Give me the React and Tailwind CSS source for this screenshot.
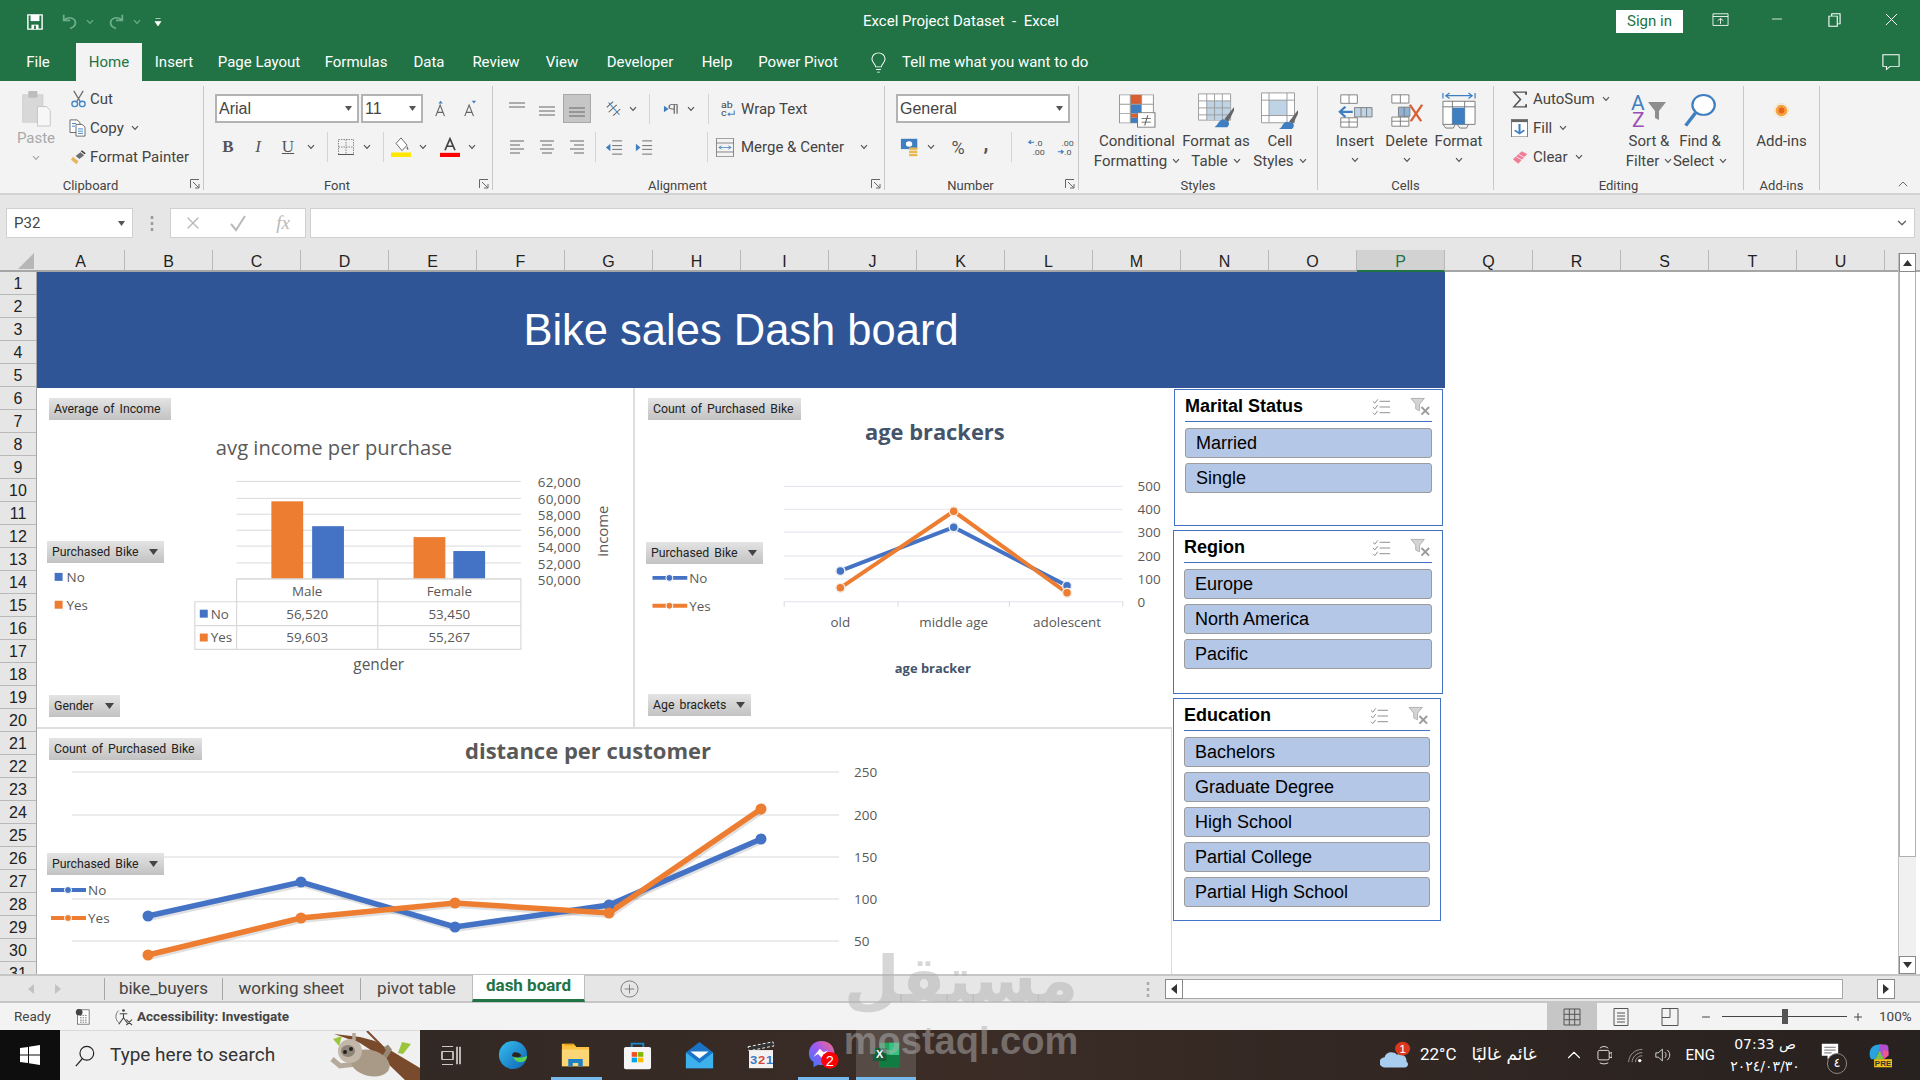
import React from "react";
import { ChevronDown, ChevronUp, Minus, Plus, X } from "lucide-react";

const Chev = ({ className = "text-[#555]" }) => (
  <svg width="8" height="6" viewBox="0 0 8 6" className={className}>
    <path d="M1 1.200 4 4.400 7 1.200" fill="none" stroke="currentColor" strokeWidth="1.200" />
  </svg>
);

const Caret = () => (
  <svg width="7" height="5" viewBox="0 0 7 5">
    <path d="M0 0h7L3.500 5z" fill="#555" />
  </svg>
);

const Sep = ({ className = "h-[30px]" }) => <div className={`w-px bg-[#d4d4d4] ${className}`} />;

const Slot = ({ className, children }) => (
  <div className={`flex items-center justify-center shrink-0 ${className}`}>{children}</div>
);

// ---- ribbon icons

const PasteIcon = () => (
  <svg width="33" height="37" viewBox="0 0 36 38" preserveAspectRatio="none">
    <rect x="3" y="5" width="22" height="28" fill="#d8d8d8" stroke="#cfcfcf" />
    <rect x="9" y="1" width="10" height="7" rx="1" fill="#bdbdbd" />
    <path d="M19 17h10l4 4v16H19z" fill="#f7f7f7" stroke="#c4c4c4" />
  </svg>
);

const CutIcon = () => (
  <svg width="17" height="18" viewBox="0 0 18 20" preserveAspectRatio="none">
    <path d="M4 1 11 13M14 1 7 13" stroke="#6f6f6f" strokeWidth="1.400" fill="none" />
    <circle cx="5" cy="15.500" r="3" fill="none" stroke="#3f87c9" strokeWidth="1.400" />
    <circle cx="13" cy="15.500" r="3" fill="none" stroke="#3f87c9" strokeWidth="1.400" />
  </svg>
);

const CopyIcon = () => (
  <svg width="18" height="18" viewBox="0 0 18 20" preserveAspectRatio="none">
    <path d="M1 1h7l3 3v11H1z" fill="#fff" stroke="#666" />
    <path d="M7 6h6l3 3v10H7z" fill="#fff" stroke="#666" />
    <path d="M3 5h4M3 8h3M9 11h5M9 13.500h5M9 16h5" stroke="#3f87c9" />
  </svg>
);

const PainterIcon = () => (
  <svg width="17" height="15" viewBox="0 0 18 20" preserveAspectRatio="none">
    <path d="M3 9 9 15 7 19 1 13z" fill="#e5b65c" />
    <path d="M6 8 11 3l4 4-5 5z" fill="#6e6e6e" />
    <path d="M12 1l4 4" stroke="#444" strokeWidth="2" />
  </svg>
);

const Launcher = () => (
  <svg width="10" height="10" viewBox="0 0 10 10" className="absolute right-[3px] bottom-[1px]">
    <path d="M.5 9V.5H9M3 3l5.500 5.500M9 5v4H5" fill="none" stroke="#666" />
  </svg>
);

const Lines = ({ ys, align = "left" }) => {
  const widths = [14, 10, 14, 10];
  return (
    <svg width="18" height="16" viewBox="0 0 18 16">
      {ys.map((y, i) => {
        const w = widths[i % 4];
        const x = align === "left" ? 2 : align === "center" ? 9 - w / 2 : 16 - w;
        return <path key={y} d={`M${x} ${y}h${w}`} stroke="#666" />;
      })}
    </svg>
  );
};

const FullLines = ({ ys }) => (
  <svg width="18" height="18" viewBox="0 0 18 18">
    {ys.map((y) => (
      <path key={y} d={`M1 ${y}h16`} stroke="#666" />
    ))}
  </svg>
);

const BorderIcon = () => (
  <svg width="18" height="18" viewBox="0 0 18 18">
    <path d="M1.500 1.500h15v15h-15zM9 1.500v15M1.500 9h15" fill="none" stroke="#8a8a8a" strokeDasharray="1.500 1" />
    <path d="M1 16.500h16" stroke="#555" />
  </svg>
);

const FillIcon = () => (
  <svg width="20" height="20" viewBox="0 0 20 22" preserveAspectRatio="none">
    <path d="M5 7 10 1l6 8-5 6z" fill="#fff" stroke="#666" />
    <path d="M16 10c1 2 2 3 1 4-1 0-2-1-1-4z" fill="#666" />
    <rect x="0" y="17" width="20" height="5" fill="#ffe600" />
  </svg>
);

const FontColorIcon = () => (
  <svg width="20" height="20" viewBox="0 0 20 24" preserveAspectRatio="none">
    <path d="M5 16 10 2l5 14M7 11h6" fill="none" stroke="#444" strokeWidth="1.700" />
    <rect x="0" y="19" width="20" height="5" fill="#ff0000" />
  </svg>
);

const GrowFont = ({ up }) => (
  <svg width="14" height="17" viewBox="0 0 16 20" preserveAspectRatio="none">
    <path d="M2 19 7 6l5 13M4 14.500h6" fill="none" stroke="#666" strokeWidth="1.300" />
    <path d={up ? "M5 4l2.500-3L10 4z" : "M10 1h5l-2.500 3z"} fill="#3f7fc1" />
  </svg>
);

const OrientIcon = () => (
  <svg width="18" height="18" viewBox="0 0 20 22" preserveAspectRatio="none">
    <path d="M2 9 9 2M4 15l9-9M9 19l8-8" stroke="#666" strokeWidth="1.200" />
    <path d="M4 3l12 15" stroke="#3f7fc1" strokeWidth="1.200" />
  </svg>
);

const RtlIcon = () => (
  <svg width="15" height="12" viewBox="0 0 16 18" preserveAspectRatio="none">
    <path d="M1 4l5 5-5 5z" fill="#3f7fc1" />
    <path d="M12 2v14M15 2v14M15 2h-5a3 3 0 0 0 0 7h2" fill="none" stroke="#666" strokeWidth="1.300" />
  </svg>
);

const WrapIcon = () => (
  <svg width="16" height="18" viewBox="0 0 18 24" preserveAspectRatio="none">
    <text x="1" y="10" fontSize="12" fill="#444">ab</text>
    <text x="1" y="22" fontSize="12" fill="#444">c</text>
    <path d="M16 14v5H9m2-2-2 2 2 2" fill="none" stroke="#3f7fc1" strokeWidth="1.200" />
  </svg>
);

const IndentIcon = ({ out }) => (
  <svg width="18" height="17" viewBox="0 0 20 18" preserveAspectRatio="none">
    <path d="M8 2h11M8 7h11M8 11h11M8 16h11" stroke="#666" />
    <path d={out ? "M6 5 1 9l5 4z" : "M1 5l5 4-5 4z"} fill="#3f7fc1" />
  </svg>
);

const MergeIcon = () => (
  <svg width="18" height="19" viewBox="0 0 19 34" preserveAspectRatio="none">
    <path d="M.5.500h18v33H.5zM.5 9h18M.5 25h18" fill="none" stroke="#666" />
    <path d="M3 17h13M6 14l-3 3 3 3M13 14l3 3-3 3" fill="none" stroke="#3f7fc1" />
  </svg>
);

const CurrencyIcon = () => (
  <svg width="20" height="19" viewBox="0 0 22 24" preserveAspectRatio="none">
    <rect x="1" y="1" width="18" height="13" fill="#3f7fc1" />
    <circle cx="10" cy="7.500" r="3.500" fill="#fff" />
    <rect x="10" y="12" width="9" height="3" fill="#e7b94e" />
    <rect x="10" y="16" width="9" height="3" fill="#e7b94e" />
    <rect x="10" y="20" width="9" height="3" fill="#e7b94e" />
  </svg>
);

const DecimalIcon = ({ more }) => (
  <svg width="18" height="18" viewBox="0 0 20 26" preserveAspectRatio="none">
    <text x={more ? 9 : 6} y="11" fontSize="10" fill="#555">{more ? ".0" : ".00"}</text>
    <text x={more ? 6 : 9} y="24" fontSize="10" fill="#555">{more ? ".00" : ".0"}</text>
    <path d={more ? "M8 6H2m2.500-2.500L2 6l2.500 2.500" : "M8 20H2m3.500-2.500L8 20l-2.500 2.500"} fill="none" stroke="#3f7fc1" strokeWidth="1.500" />
  </svg>
);

const CondIcon = () => (
  <svg width="37" height="34" viewBox="0 0 36 40" preserveAspectRatio="none">
    <path d="M.5 1h33v33H.5z" fill="#fff" stroke="#999" />
    <rect x="11" y="1" width="11" height="11" fill="#d95f33" />
    <rect x="11" y="12" width="11" height="11" fill="#3f7fc1" />
    <rect x="11" y="23" width="11" height="5" fill="#d95f33" />
    <rect x="11" y="28" width="11" height="6" fill="#3f7fc1" />
    <path d="M.5 12h33M.5 23h33M11 1v33M22 1v11" stroke="#999" />
    <rect x="18" y="22" width="17" height="17" fill="#fff" stroke="#777" />
    <path d="M22 29h9M22 33h9M28 25l-3 12" stroke="#555" />
  </svg>
);

const TableIcon = () => (
  <svg width="37" height="35" viewBox="0 0 38 40" preserveAspectRatio="none">
    <path d="M.5 1h33v30H.5z" fill="#fff" stroke="#999" />
    <rect x="9" y="9" width="24" height="22" fill="#bfd3e6" />
    <path d="M.5 9h33M.5 17h33M.5 25h33M9 1v30M17 1v30M25 1v30" stroke="#999" />
    <path d="M37 16 27 30l4 3 6-13z" fill="#666" />
    <path d="M26 30c-5 1-5 6-9 9h13c3-3 2-6 0-7z" fill="#3f7fc1" />
  </svg>
);

const CellStyleIcon = () => (
  <svg width="38" height="38" viewBox="0 0 38 42" preserveAspectRatio="none">
    <path d="M.5 1h33v33H.5z" fill="#fff" stroke="#999" />
    <rect x="8" y="9" width="18" height="17" fill="#bfd3e6" />
    <path d="M8 1v33M26 1v33M.5 9h33M.5 26h33" stroke="#999" />
    <path d="M37 20 28 33l4 2 5-11z" fill="#666" />
    <path d="M26 33c-5 1-4 6-8 8h13c3-3 2-6 0-7z" fill="#3f7fc1" />
  </svg>
);

const InsertIcon = () => (
  <svg width="35" height="34" viewBox="0 0 38 40" preserveAspectRatio="none">
    <path d="M3 1h18v10H3zM12 1v10M3 28h18v11H3zM3 33h18M12 28v11" fill="#fff" stroke="#777" />
    <path d="M18 16h19v11H18zM25 16v11M31 16v11" fill="#bfd3e6" stroke="#777" />
    <path d="M16 21H2m6-6-6 6 6 6" fill="none" stroke="#3f7fc1" strokeWidth="2.500" />
  </svg>
);

const DeleteIcon = () => (
  <svg width="36" height="33" viewBox="0 0 38 40" preserveAspectRatio="none">
    <path d="M3 1h18v10H3zM12 1v10M3 28h18v11H3zM3 33h18M12 28v11" fill="#fff" stroke="#777" />
    <path d="M10 16h12v11H10zM16 16v11" fill="#8fb3d6" stroke="#777" />
    <path d="M22 13 34 33M35 13 23 33" stroke="#d95f33" strokeWidth="2.500" />
  </svg>
);

const FormatIcon = () => (
  <svg width="34" height="37" viewBox="0 0 36 40" preserveAspectRatio="none">
    <path d="M1 1v6M35 1v6M4 4h28M8 1 4 4l4 3M28 1l4 3-4 3" fill="none" stroke="#3f7fc1" strokeWidth="1.300" />
    <path d="M1 10h34v25H1zM11 10v25M24 10v25M1 16h34" fill="#fff" stroke="#777" />
    <rect x="11" y="17" width="13" height="18" fill="#3f7fc1" />
    <path d="M1 35l3 4h8l2-4M16 35l3 4h7l2-4" fill="none" stroke="#777" />
  </svg>
);

const SumIcon = () => (
  <svg width="15" height="17" viewBox="0 0 16 28" preserveAspectRatio="none">
    <path d="M15 6V2H2l7 12-7 12h13v-4" fill="none" stroke="#555" strokeWidth="2" />
  </svg>
);

const FillDown = () => (
  <svg width="17" height="18" viewBox="0 0 18 32" preserveAspectRatio="none">
    <rect x=".5" y=".5" width="17" height="31" fill="#fff" stroke="#777" />
    <rect x=".5" y=".5" width="17" height="5" fill="#666" />
    <path d="M9 9v16M4 20l5 6 5-6" fill="none" stroke="#3f7fc1" strokeWidth="2.200" />
  </svg>
);

const ClearIcon = () => (
  <svg width="16" height="15" viewBox="0 0 18 26" preserveAspectRatio="none">
    <path d="M1 16 11 2l6 5L7 24z" fill="#ee7f97" />
    <path d="M5 12l7 6M8 8l6 5" stroke="#fff" />
  </svg>
);

const SortIcon = () => (
  <svg width="36" height="34" viewBox="0 0 36 34" className="font-['Roboto',sans-serif]">
    <text x="0" y="16" fontSize="21" fill="#3f7fc1">A</text>
    <text x="1" y="33" fontSize="21" fill="#9b4fb5">Z</text>
    <path d="M17 8h18l-7 9v9l-4-2v-7z" fill="#8e8e8e" />
  </svg>
);

const FindIcon = () => (
  <svg width="34" height="35" viewBox="0 0 38 44" preserveAspectRatio="none">
    <circle cx="23" cy="15" r="12.500" fill="#fff" stroke="#3f7fc1" strokeWidth="2.500" />
    <path d="M14 25 3 41" stroke="#3f7fc1" strokeWidth="4" />
  </svg>
);

const AddinsIcon = () => (
  <svg width="15" height="15" viewBox="0 0 18 18">
    <circle cx="9" cy="9" r="7" fill="#f5a142" />
    <circle cx="9" cy="9" r="3.500" fill="#e8641b" />
    <circle cx="9" cy="9" r="8.500" fill="none" stroke="#f7d07a" strokeDasharray="1.500 1.500" />
  </svg>
);

// ---- ribbon parts

const RibbonGroup = ({ className, label, launcher, children }) => (
  <div className={`relative flex h-[104px] flex-col shrink-0 border-r border-[#c8c8c8] ${className}`}>
    <div className="h-[91px]">{children}</div>
    <div className={`h-[13px] text-center text-[13px] leading-[18px] text-[#444] ${launcher ? "pr-[22px]" : ""}`}>{label}</div>
    {launcher && <Launcher />}
  </div>
);

const SmallBtn = ({ icon, label, chev, iconClass = "w-[24px]" }) => (
  <div className="flex h-[24px] items-center whitespace-nowrap text-[#444]">
    <Slot className={iconClass}>{icon}</Slot>
    <span className="flex items-center">{label}</span>
    {chev && <span className="flex pl-[7px]"><Chev /></span>}
  </div>
);

const LargeBtn = ({ icon, lines, chev, className }) => (
  <div className={`flex flex-col items-center shrink-0 pt-[4px] leading-[20px] text-[#444] ${className}`}>
    <div className="flex h-[41px] items-center">{icon}</div>
    {lines.map((line, i) => (
      <div key={line} className="flex items-center gap-[5px] whitespace-nowrap">
        {line}
        {chev && i === 1 && <Chev />}
      </div>
    ))}
    {chev && lines.length === 1 && <div className="flex h-[16px] items-center pt-[2px]"><Chev /></div>}
  </div>
);

const SelectBox = ({ className, children }) => (
  <div className={`flex h-[29px] items-center justify-between border-2 border-[#b3b3b3] bg-white pl-[2px] pr-[5px] text-[#444] ${className}`}>
    {children}
    <Caret />
  </div>
);

const Ribbon = () => (
  <div className="flex h-[114px] shrink-0 border-b-2 border-[#d2d2d2] bg-[#f3f3f3] pt-[5px] text-[15px] font-['Roboto',sans-serif]">
    <RibbonGroup className="w-[204px]" label="Clipboard" launcher>
      <div className="flex">
        <div className="ml-[8px] flex w-[56px] flex-col items-center pt-[4px] text-[#a9a9a9]">
          <PasteIcon />
          <div className="leading-[20px] pt-[1px]">Paste</div>
          <div className="pt-[7px]"><Chev className="text-[#a9a9a9]" /></div>
        </div>
        <div className="ml-[2px] flex flex-col gap-[5px] pt-[1px]">
          <SmallBtn icon={<CutIcon />} label="Cut" />
          <SmallBtn icon={<CopyIcon />} label="Copy" chev />
          <SmallBtn icon={<PainterIcon />} label="Format Painter" />
        </div>
      </div>
    </RibbonGroup>

    <RibbonGroup className="w-[289px]" label="Font" launcher>
      <div className="flex flex-col pt-[8px]">
        <div className="ml-[11px] flex items-center">
          <SelectBox className="w-[144px] font-['Liberation_Sans',sans-serif] text-[16px]">Arial</SelectBox>
          <SelectBox className="ml-[2px] w-[62px] font-['Liberation_Sans',sans-serif] text-[16px]">11</SelectBox>
          <Slot className="ml-[3px] w-[30px]"><GrowFont up /></Slot>
          <Slot className="w-[28px]"><GrowFont /></Slot>
        </div>
        <div className="ml-[9px] mt-[9px] flex h-[30px] items-center text-[#555]">
          <Slot className="w-[30px] font-['Liberation_Serif',serif] text-[17px] font-bold">B</Slot>
          <Slot className="w-[30px] font-['Liberation_Serif',serif] text-[17px] italic">I</Slot>
          <Slot className="w-[30px] font-['Liberation_Serif',serif] text-[17px] underline">U</Slot>
          <Slot className="w-[16px]"><Chev /></Slot>
          <Slot className="w-[16px]"><Sep /></Slot>
          <Slot className="w-[22px]"><BorderIcon /></Slot>
          <Slot className="w-[20px]"><Chev /></Slot>
          <Slot className="w-[12px]"><Sep /></Slot>
          <Slot className="w-[24px]"><FillIcon /></Slot>
          <Slot className="w-[20px]"><Chev /></Slot>
          <Slot className="w-[34px]"><FontColorIcon /></Slot>
          <Slot className="w-[10px]"><Chev /></Slot>
        </div>
      </div>
    </RibbonGroup>

    <RibbonGroup className="w-[392px]" label="Alignment" launcher>
      <div className="flex flex-col pt-[8px] pl-[9px]">
        <div className="flex h-[29px] items-center">
          <Slot className="w-[30px]"><FullLines ys={[3, 7]} /></Slot>
          <Slot className="w-[30px]"><FullLines ys={[7, 11, 15]} /></Slot>
          <Slot className="ml-[1px] h-[29px] w-[28px] border border-[#a8a8a8] bg-[#c6c6c6]"><FullLines ys={[8, 12, 16]} /></Slot>
          <Slot className="ml-[9px] w-[28px]"><OrientIcon /></Slot>
          <Slot className="w-[10px]"><Chev /></Slot>
          <Slot className="w-[22px]"><Sep /></Slot>
          <Slot className="w-[20px]"><RtlIcon /></Slot>
          <Slot className="w-[22px]"><Chev /></Slot>
          <Slot className="w-[12px]"><Sep /></Slot>
          <Slot className="w-[27px]"><WrapIcon /></Slot>
          <span className="whitespace-nowrap pt-[1px] text-[#444]">Wrap Text</span>
        </div>
        <div className="mt-[9px] flex h-[30px] items-center">
          <Slot className="w-[30px]"><Lines ys={[2, 6, 10, 14]} /></Slot>
          <Slot className="w-[30px]"><Lines ys={[2, 6, 10, 14]} align="center" /></Slot>
          <Slot className="w-[30px]"><Lines ys={[2, 6, 10, 14]} align="right" /></Slot>
          <Slot className="w-[6px]"><Sep /></Slot>
          <Slot className="w-[31px]"><IndentIcon out /></Slot>
          <Slot className="w-[29px]"><IndentIcon /></Slot>
          <Slot className="ml-[49px] w-[1px]"><Sep /></Slot>
          <Slot className="w-[33px]"><MergeIcon /></Slot>
          <span className="whitespace-nowrap pt-[1px] text-[#444]">Merge &amp; Center</span>
          <Slot className="ml-[15px] w-[10px]"><Chev /></Slot>
        </div>
      </div>
    </RibbonGroup>

    <RibbonGroup className="w-[194px]" label="Number" launcher>
      <div className="flex flex-col pt-[8px] pl-[11px]">
        <SelectBox className="w-[174px] font-['Liberation_Sans',sans-serif] text-[16px]">General</SelectBox>
        <div className="mt-[9px] flex h-[30px] items-center text-[#555]">
          <Slot className="w-[28px]"><CurrencyIcon /></Slot>
          <Slot className="w-[14px]"><Chev /></Slot>
          <Slot className="ml-[6px] w-[28px] text-[18px]">%</Slot>
          <Slot className="w-[28px] pb-[8px] text-[20px] font-bold">,</Slot>
          <Slot className="w-[22px]"><Sep /></Slot>
          <Slot className="w-[28px]"><DecimalIcon more /></Slot>
          <Slot className="w-[30px]"><DecimalIcon /></Slot>
        </div>
      </div>
    </RibbonGroup>

    <RibbonGroup className="w-[239px]" label="Styles">
      <div className="flex pl-[10px]">
        <LargeBtn className="w-[96px]" icon={<CondIcon />} lines={["Conditional", "Formatting"]} chev />
        <LargeBtn className="w-[62px]" icon={<TableIcon />} lines={["Format as", "Table"]} chev />
        <LargeBtn className="w-[66px]" icon={<CellStyleIcon />} lines={["Cell", "Styles"]} chev />
      </div>
    </RibbonGroup>

    <RibbonGroup className="w-[176px]" label="Cells">
      <div className="flex pl-[11px]">
        <LargeBtn className="w-[52px]" icon={<InsertIcon />} lines={["Insert"]} chev />
        <LargeBtn className="w-[51px]" icon={<DeleteIcon />} lines={["Delete"]} chev />
        <LargeBtn className="w-[53px]" icon={<FormatIcon />} lines={["Format"]} chev />
      </div>
    </RibbonGroup>

    <RibbonGroup className="w-[250px]" label="Editing">
      <div className="flex">
        <div className="ml-[12px] flex w-[116px] flex-col gap-[5px] pt-[1px]">
          <SmallBtn icon={<SumIcon />} label="AutoSum" chev iconClass="w-[27px]" />
          <SmallBtn icon={<FillDown />} label="Fill" chev iconClass="w-[27px]" />
          <SmallBtn icon={<ClearIcon />} label="Clear" chev iconClass="w-[27px]" />
        </div>
        <LargeBtn className="w-[54px]" icon={<SortIcon />} lines={["Sort &", "Filter"]} chev />
        <LargeBtn className="w-[48px]" icon={<FindIcon />} lines={["Find &", "Select"]} chev />
      </div>
    </RibbonGroup>

    <RibbonGroup className="w-[76px]" label="Add-ins">
      <LargeBtn icon={<AddinsIcon />} lines={["Add-ins"]} />
    </RibbonGroup>

    <div className="flex flex-1 items-end justify-end pr-[9px] pb-[1px] text-[#555]">
      <ChevronUp size={16} strokeWidth={1.300} />
    </div>
  </div>
);

// ---- title and tabs

const TABS = [
  ["File", "w-[76px]"],
  ["Home", "w-[66px] bg-[#f3f3f3] text-[#217346]"],
  ["Insert", "w-[64px]"],
  ["Page Layout", "w-[106px]"],
  ["Formulas", "w-[88px]"],
  ["Data", "w-[58px]"],
  ["Review", "w-[76px]"],
  ["View", "w-[56px]"],
  ["Developer", "w-[100px]"],
  ["Help", "w-[54px]"],
  ["Power Pivot", "w-[108px]"],
];

const TitleBar = () => (
  <div className="shrink-0 bg-[#217346] text-[15px] text-white font-['Roboto',sans-serif]">
    <div className="flex h-[43px] items-center">
      <div className="flex w-[863px] shrink-0 items-center">
        <Slot className="ml-[24px] w-[22px]">
          <svg width="16" height="16" viewBox="0 0 18 18">
            <path d="M1 1h16v16H1z" fill="none" stroke="#fff" strokeWidth="1.600" />
            <rect x="4" y="1" width="10" height="7" fill="#fff" />
            <rect x="5" y="12" width="8" height="5" fill="#fff" />
            <rect x="8" y="13" width="2" height="4" fill="#217346" />
          </svg>
        </Slot>
        <Slot className="ml-[13px] w-[22px] text-[#6fae8c]">
          <svg width="18" height="16" viewBox="0 0 20 20" preserveAspectRatio="none">
            <path d="M3 1v7h7M3.500 7.500C7 3 16 4 16 11c0 4-3 6-6 7" fill="none" stroke="currentColor" strokeWidth="2" />
          </svg>
        </Slot>
        <Slot className="ml-[4px] w-[10px]"><Chev className="text-[#6fae8c]" /></Slot>
        <Slot className="ml-[10px] w-[22px] text-[#6fae8c]">
          <svg width="18" height="16" viewBox="0 0 20 20" preserveAspectRatio="none">
            <path d="M17 1v7h-7M16.500 7.500C13 3 4 4 4 11c0 4 3 6 6 7" fill="none" stroke="currentColor" strokeWidth="2" />
          </svg>
        </Slot>
        <Slot className="ml-[5px] w-[10px]"><Chev className="text-[#6fae8c]" /></Slot>
        <Slot className="ml-[11px] w-[10px]">
          <svg width="8" height="10" viewBox="0 0 8 10">
            <path d="M1.500 1.500h5M1 4.500h6L4 9z" fill="#fff" stroke="#fff" strokeWidth=".6" />
          </svg>
        </Slot>
      </div>
      <div className="whitespace-pre">Excel Project Dataset  -  Excel</div>
      <div className="flex-1" />
      <div className="flex h-[23px] w-[67px] items-center justify-center bg-white text-[#217346]">Sign in</div>
      <Slot className="ml-[9px] w-[56px] pb-[4px]">
        <svg width="17" height="14" viewBox="0 0 18 18" preserveAspectRatio="none">
          <path d="M1 1h16v15H1zM1 4.500h16M9 14V7M6 10l3-3 3 3" fill="none" stroke="#fff" />
        </svg>
      </Slot>
      <Slot className="w-[57px] pb-[6px]"><Minus size={16} strokeWidth={1.200} /></Slot>
      <Slot className="w-[58px] pb-[4px]">
        <svg width="13" height="14" viewBox="0 0 14 18" preserveAspectRatio="none">
          <path d="M1 4h9v13H1zM4 4V1h9v13h-3" fill="none" stroke="#fff" strokeWidth="1.200" />
        </svg>
      </Slot>
      <Slot className="w-[57px] pb-[4px]"><X size={21} strokeWidth={1.100} /></Slot>
    </div>
    <div className="flex h-[38px] items-stretch">
      {TABS.map(([name, cls]) => (
        <div key={name} className={`flex items-center justify-center whitespace-nowrap ${cls}`}>{name}</div>
      ))}
      <Slot className="ml-[18px] w-[16px]">
        <svg width="15" height="21" viewBox="0 0 16 24" preserveAspectRatio="none">
          <path d="M5 17c0-3-4-5-4-9a7 7 0 0 1 14 0c0 4-4 6-4 9zM5.500 20h5M6.500 23h3" fill="none" stroke="#fff" strokeWidth="1.100" />
        </svg>
      </Slot>
      <div className="ml-[16px] flex items-center whitespace-nowrap">Tell me what you want to do</div>
      <div className="flex-1" />
      <Slot className="w-[58px]">
        <svg width="18" height="17" viewBox="0 0 20 22" preserveAspectRatio="none">
          <path d="M1 1h18v15H9l-4 4v-4H1z" fill="none" stroke="#fff" strokeWidth="1.200" />
        </svg>
      </Slot>
    </div>
  </div>
);

const FormulaBar = () => (
  <div className="flex h-[55px] shrink-0 items-center bg-[#e6e6e6] pl-[6px] pr-[5px] pt-[1px] font-['Roboto',sans-serif] text-[15px]">
    <div className="flex h-[30px] w-[127px] items-center justify-between border border-[#d0d0d0] bg-white pl-[7px] pr-[7px] text-[#444]">
      P32
      <Caret />
    </div>
    <div className="flex w-[37px] justify-center text-[#9a9a9a]">
      <svg width="4" height="16" viewBox="0 0 4 16">
        <path d="M2 1v3M2 7v3M2 13v3" stroke="#9a9a9a" strokeWidth="2.500" />
      </svg>
    </div>
    <div className="flex h-[30px] w-[136px] items-center border border-[#d0d0d0] bg-white text-[#b9b9b9]">
      <Slot className="w-[44px]"><X size={20} strokeWidth={1.600} /></Slot>
      <Slot className="w-[46px]">
        <svg width="18" height="18" viewBox="0 0 18 18">
          <path d="M2 10l5 6 9-14" fill="none" stroke="currentColor" strokeWidth="2" />
        </svg>
      </Slot>
      <Slot className="w-[44px] font-['Liberation_Serif',serif] text-[19px] italic">fx</Slot>
    </div>
    <div className="ml-[4px] flex h-[30px] flex-1 items-center justify-end border border-[#d0d0d0] bg-white pr-[5px] text-[#666]">
      <ChevronDown size={14} strokeWidth={2.400} />
    </div>
  </div>
);

// ---- sheet

const COLS = "ABCDEFGHIJKLMNOPQRSTU".split("");
const ROWS = Array.from({ length: 31 }, (_, i) => i + 1);

const ColumnHeader = () => (
  <div className="flex h-[22px] shrink-0 border-b-2 border-[#a6a6a6] bg-[#e6e6e6] font-['Liberation_Sans',sans-serif] text-[16px] leading-[24px] text-[#222]">
    <div className="flex w-[37px] shrink-0 items-end justify-end pr-[3px] pb-[1px]">
      <svg width="16" height="16" viewBox="0 0 16 16">
        <path d="M16 0v16H0z" fill="#b7b7b7" />
      </svg>
    </div>
    {COLS.map((c) => (
      <div
        key={c}
        className={`flex w-[88px] shrink-0 justify-center border-r border-[#b9b9b9] ${
          c === "P" ? "h-[22px] border-b-2 border-b-[#217346] bg-[#d2d2d2] text-[#217346]" : ""
        }`}
      >
        {c}
      </div>
    ))}
  </div>
);

const RowHeader = () => (
  <div className="h-full w-[37px] shrink-0 overflow-hidden border-r border-[#a6a6a6] bg-[#e6e6e6] font-['Liberation_Sans',sans-serif] text-[16px] text-[#222]">
    {ROWS.map((r) => (
      <div key={r} className="flex h-[23px] items-center justify-center border-b border-[#b9b9b9] pt-[2px]">{r}</div>
    ))}
  </div>
);

const PivotBtn = ({ className, label, caret }) => (
  <div className={`absolute flex h-[22px] items-center justify-between bg-gradient-to-b from-[#e4e4e4] to-[#c2c2c2] pl-[5px] pr-[4px] font-['Roboto',sans-serif] text-[12.300px] text-[#222] [word-spacing:2px] ${className}`}>
    <span className="whitespace-nowrap">{label}</span>
    {caret && (
      <svg width="9" height="6" viewBox="0 0 9 6" className="mr-[2px]">
        <path d="M0 0h9L4.500 6z" fill="#444" />
      </svg>
    )}
  </div>
);

const BarChart = () => {
  const grid = [482, 499, 515, 531, 547, 564, 580];
  const ticks = ["62,000", "60,000", "58,000", "56,000", "54,000", "52,000", "50,000"];
  return (
    <svg viewBox="37 388 598 341" className="h-full w-full font-['Open_Sans',sans-serif]" fill="#595959">
      <text x="335" y="455" fontSize="20.300" textAnchor="middle">avg income per purchase</text>
      {grid.map((y, i) => (
        <g key={y}>
          <path d={`M237 ${y}H523`} stroke="#d9d9d9" />
          <text x="540" y={y + 6} fontSize="13.500" textLength="43">{ticks[i]}</text>
        </g>
      ))}
      <rect x="272" y="502" width="32" height="78" fill="#ed7d31" />
      <rect x="313" y="527" width="32" height="53" fill="#4472c4" />
      <rect x="415" y="538" width="32" height="42" fill="#ed7d31" />
      <rect x="455" y="552" width="32" height="28" fill="#4472c4" />
      <text transform="translate(611 532) rotate(-90)" fontSize="15" textAnchor="middle">income</text>
      <path d="M237 580H523V651H195V603H523M195 627H523M237 580V651M379 580V651" fill="none" stroke="#d9d9d9" strokeWidth="1.200" />
      <text x="308" y="597" fontSize="13.500" textAnchor="middle">Male</text>
      <text x="451" y="597" fontSize="13.500" textAnchor="middle">Female</text>
      <rect x="200" y="611" width="8" height="8" fill="#4472c4" />
      <rect x="200" y="635" width="8" height="8" fill="#ed7d31" />
      <text x="211" y="620" fontSize="13.500">No</text>
      <text x="211" y="644" fontSize="13.500">Yes</text>
      <text x="308" y="620" fontSize="13.500" textAnchor="middle">56,520</text>
      <text x="451" y="620" fontSize="13.500" textAnchor="middle">53,450</text>
      <text x="308" y="644" fontSize="13.500" textAnchor="middle">59,603</text>
      <text x="451" y="644" fontSize="13.500" textAnchor="middle">55,267</text>
      <text x="380" y="672" fontSize="15.500" textAnchor="middle">gender</text>
      <rect x="54" y="574" width="8" height="8" fill="#4472c4" />
      <text x="66" y="583" fontSize="13.500">No</text>
      <rect x="54" y="602" width="8" height="8" fill="#ed7d31" />
      <text x="66" y="611" fontSize="13.500">Yes</text>
    </svg>
  );
};

const LegendLine = ({ x, y, color, label }) => (
  <g>
    <path d={`M${x} ${y}h35`} stroke={color} strokeWidth="4" />
    <circle cx={x + 17} cy={y} r="3.500" fill={color} stroke="#fff" />
    <text x={x + 37} y={y + 5} fontSize="13.500" fill="#595959">{label}</text>
  </g>
);

const AgeChart = () => {
  const grid = [[487, "500"], [510, "400"], [533, "300"], [557, "200"], [580, "100"], [603, "0"]];
  return (
    <svg viewBox="635 388 537 341" className="h-full w-full font-['Open_Sans',sans-serif]">
      <text x="935" y="440" fontSize="22" fontWeight="700" fill="#44546a" textAnchor="middle">age brackers</text>
      {grid.map(([y, t]) => (
        <g key={y}>
          <path d={`M783 ${y}H1124`} stroke="#dfe3ea" />
          <text x="1139" y={y + 5} fontSize="13.500" fill="#595959">{t}</text>
        </g>
      ))}
      <path d="M783.500 603v5M898 603v5M1010 603v5M1124 603v5" stroke="#d9d9d9" />
      <path d="M840 572 954 528 1068 587" fill="none" stroke="#4472c4" strokeWidth="4" />
      <path d="M840 589 954 512 1068 594" fill="none" stroke="#ed7d31" strokeWidth="4" />
      {[[840, 572], [954, 528], [1068, 587]].map(([x, y]) => (
        <circle key={x} cx={x} cy={y} r="4.500" fill="#4472c4" stroke="#e9edf5" strokeWidth="1.500" />
      ))}
      {[[840, 589], [954, 512], [1068, 594]].map(([x, y]) => (
        <circle key={x} cx={x} cy={y} r="4.500" fill="#ed7d31" stroke="#f5ece6" strokeWidth="1.500" />
      ))}
      <g fontSize="13.500" fill="#595959" textAnchor="middle">
        <text x="840" y="628">old</text>
        <text x="954" y="628">middle age</text>
        <text x="1068" y="628">adolescent</text>
      </g>
      <text x="933" y="675" fontSize="13" fontWeight="700" fill="#44546a" textAnchor="middle">age bracker</text>
      <LegendLine x={651} y={579} color="#4472c4" label="No" />
      <LegendLine x={651} y={607} color="#ed7d31" label="Yes" />
    </svg>
  );
};

const DistanceChart = () => {
  const grid = [[772, "250"], [815, "200"], [857, "150"], [899, "100"], [941, "50"]];
  const no = [[148, 916], [301, 882], [455, 927], [609, 905], [761, 839]];
  const yes = [[148, 955], [301, 918], [455, 903], [609, 913], [761, 809]];
  const toD = (pts) => pts.map(([x, y], i) => `${i ? "L" : "M"}${x} ${y}`).join(" ");
  return (
    <svg viewBox="37 728 1134 246" className="h-full w-full font-['Open_Sans',sans-serif]">
      <text x="588" y="759" fontSize="22" fontWeight="700" fill="#595959" textAnchor="middle">distance per customer</text>
      {grid.map(([y, t]) => (
        <g key={y}>
          <path d={`M72 ${y}H839`} stroke="#d9d9d9" />
          <text x="854" y={y + 5} fontSize="13.500" fill="#595959">{t}</text>
        </g>
      ))}
      <path d={toD(no)} transform="translate(1 2)" fill="none" stroke="#000" strokeOpacity=".12" strokeWidth="6" />
      <path d={toD(yes)} transform="translate(1 2)" fill="none" stroke="#000" strokeOpacity=".12" strokeWidth="6" />
      <path d={toD(no)} fill="none" stroke="#4472c4" strokeWidth="5.500" />
      <path d={toD(yes)} fill="none" stroke="#ed7d31" strokeWidth="5.500" />
      {no.map(([x, y]) => <circle key={x} cx={x} cy={y} r="5.500" fill="#4472c4" />)}
      {yes.map(([x, y]) => <circle key={x} cx={x} cy={y} r="5.500" fill="#ed7d31" />)}
      <LegendLine x={51} y={890} color="#4472c4" label="No" />
      <LegendLine x={51} y={918} color="#ed7d31" label="Yes" />
    </svg>
  );
};

const Slicer = ({ className, title, items }) => (
  <div className={`absolute border-[1.5px] border-[#4472c4] bg-white px-[10px] font-['Liberation_Sans',sans-serif] text-black ${className}`}>
    <div className="flex h-[32px] items-center justify-between border-b border-[#4472c4] pt-[2px]">
      <span className="text-[18px] font-bold">{title}</span>
      <div className="flex items-center gap-[19px] pr-[1px]">
        <svg width="19" height="18" viewBox="0 0 20 18">
          <path d="M8 3h11M8 9h11M8 15h11" stroke="#8a8a8a" />
          <path d="M1 3l2 2 3-4M1 9l2 2 3-4M1 15l2 2 3-4" fill="none" stroke="#8a8a8a" />
        </svg>
        <svg width="21" height="20" viewBox="0 0 22 20">
          <path d="M1 1h14L10 7v7l-4-2V7z" fill="#d4d4d4" stroke="#b0b0b0" />
          <path d="M12 10l8 8M20 10l-8 8" stroke="#9a9a9a" strokeWidth="2" />
        </svg>
      </div>
    </div>
    <div className="flex flex-col gap-[5px] pt-[6px]">
      {items.map((item) => (
        <div key={item} className="flex h-[30px] items-center rounded-[3px] border border-[#9c9c9c] bg-[#b4c7e7] pl-[10px] text-[18px]">
          {item}
        </div>
      ))}
    </div>
  </div>
);

const Caret2 = ({ up }) => (
  <svg width="9" height="6" viewBox="0 0 9 6">
    <path d={up ? "M0 6h9L4.500 0z" : "M0 0h9L4.500 6z"} fill="#333" />
  </svg>
);

const Sheet = () => (
  <div className="relative flex min-h-0 flex-1">
    <RowHeader />
    <div className="relative flex-1 bg-white">
      <div className="flex h-[116px] w-[1408px] items-center justify-center bg-[#2f5597] pt-[2px] font-['Liberation_Sans',sans-serif] text-[43.500px] text-white">
        Bike sales Dash board
      </div>

      <div className="absolute left-0 top-[116px] h-[341px] w-[598px] border-r-2 border-b-2 border-[#dedede]">
        <BarChart />
        <PivotBtn className="left-[12px] top-[10px] w-[122px]" label="Average of Income" />
        <PivotBtn className="left-[10px] top-[153px] w-[117px]" label="Purchased Bike" caret />
        <PivotBtn className="left-[12px] top-[307px] w-[71px]" label="Gender" caret />
      </div>

      <div className="absolute left-[598px] top-[116px] h-[341px] w-[537px] border-b-2 border-[#dedede]">
        <AgeChart />
        <PivotBtn className="left-[13px] top-[10px] w-[153px]" label="Count of Purchased Bike" />
        <PivotBtn className="left-[11px] top-[154px] w-[117px]" label="Purchased Bike" caret />
        <PivotBtn className="left-[13px] top-[306px] w-[103px]" label="Age brackets" caret />
      </div>

      <div className="absolute left-0 top-[456px] h-[246px] w-[1135px] border-r border-[#d9d9d9]">
        <DistanceChart />
        <PivotBtn className="left-[12px] top-[10px] w-[153px]" label="Count of Purchased Bike" />
        <PivotBtn className="left-[10px] top-[125px] w-[117px]" label="Purchased Bike" caret />
      </div>

      <Slicer className="left-[1137px] top-[117px] h-[137px] w-[269px]" title="Marital Status" items={["Married", "Single"]} />
      <Slicer className="left-[1136px] top-[258px] h-[164px] w-[270px]" title="Region" items={["Europe", "North America", "Pacific"]} />
      <Slicer
        className="left-[1136px] top-[426px] h-[223px] w-[268px]"
        title="Education"
        items={["Bachelors", "Graduate Degree", "High School", "Partial College", "Partial High School"]}
      />

      <div className="absolute bottom-0 right-[4px] top-[-19px] flex w-[18px] flex-col border-l border-[#bdbdbd] bg-[#f0f0f0]">
        <div className="flex h-[19px] items-center justify-center border border-[#8a8a8a] bg-white"><Caret2 up /></div>
        <div className="h-[585px] border-x border-b border-[#b0b0b0] bg-white" />
        <div className="flex-1" />
        <div className="flex h-[18px] items-center justify-center border border-[#8a8a8a] bg-white"><Caret2 /></div>
      </div>
    </div>
  </div>
);

const SideArrow = ({ left }) => (
  <svg width="6" height="10" viewBox="0 0 6 10">
    <path d={left ? "M6 0v10L0 5z" : "M0 0v10l6-5z"} fill="#333" />
  </svg>
);

const SHEET_TABS = [
  ["bike_buyers", "w-[118px]"],
  ["working sheet", "w-[138px]"],
  ["pivot table", "w-[112px]"],
];

const SheetTabs = () => (
  <div className="flex h-[29px] shrink-0 items-center border-y-2 border-[#c6c6c6] bg-[#e6e6e6] font-['Roboto',sans-serif] text-[17px] text-[#444]">
    <div className="flex h-full w-[104px] shrink-0 items-center pl-[28px] text-[#c2c2c2]">
      <svg width="6" height="10" viewBox="0 0 6 10"><path d="M6 0v10L0 5z" fill="currentColor" /></svg>
      <svg width="6" height="10" viewBox="0 0 6 10" className="ml-[21px]"><path d="M0 0v10l6-5z" fill="currentColor" /></svg>
    </div>
    {SHEET_TABS.map(([name, w]) => (
      <div key={name} className={`flex h-[22px] shrink-0 items-center justify-center border-l border-[#a6a6a6] ${w}`}>{name}</div>
    ))}
    <div className="flex h-[27px] w-[113px] shrink-0 items-center justify-center border-x border-b-[3px] border-x-[#bdbdbd] border-b-[#217346] bg-white pb-[2px] font-bold text-[#217346]">
      dash board
    </div>
    <Slot className="ml-[34px] w-[20px]">
      <svg width="19" height="18" viewBox="0 0 20 20" preserveAspectRatio="none">
        <circle cx="10" cy="10" r="9" fill="none" stroke="#777" />
        <path d="M10 5v10M5 10h10" stroke="#777" />
      </svg>
    </Slot>
    <div className="flex-1" />
    <svg width="4" height="16" viewBox="0 0 4 16"><path d="M2 1v3M2 7v3M2 13v3" stroke="#aaa" strokeWidth="2.500" /></svg>
    <div className="ml-[15px] flex h-[20px] w-[18px] items-center justify-center border border-[#8a8a8a] bg-white"><SideArrow left /></div>
    <div className="h-[20px] w-[660px] border-y border-r border-[#a8a8a8] bg-white" />
    <div className="w-[34px]" />
    <div className="flex h-[20px] w-[18px] items-center justify-center border border-[#8a8a8a] bg-white"><SideArrow /></div>
    <div className="w-[25px]" />
  </div>
);

const StatusBar = () => (
  <div className="flex h-[27px] shrink-0 items-center bg-[#f3f3f3] font-['Roboto',sans-serif] text-[13.500px] text-[#444]">
    <div className="ml-[14px] w-[61px]">Ready</div>
    <svg width="15" height="16" viewBox="0 0 18 20" preserveAspectRatio="none">
      <rect x="3" y="1" width="14" height="18" fill="#fff" stroke="#666" />
      <path d="M6 8h8M6 11h8M6 14h8M6 16.500h8" stroke="#666" strokeDasharray="2 1" />
      <circle cx="5" cy="4" r="4" fill="#444" />
    </svg>
    <svg width="19" height="18" viewBox="0 0 20 22" className="ml-[24px]" preserveAspectRatio="none">
      <path d="M5 3C1 7 1 14 5 18" fill="none" stroke="#666" />
      <circle cx="10" cy="3" r="1.500" fill="#444" />
      <path d="M6 7h8M10 7v5M5 20l5-8 5 8M13 14l6 7M19 14l-6 7" fill="none" stroke="#444" strokeWidth="1.200" />
    </svg>
    <span className="ml-[4px] font-bold">Accessibility: Investigate</span>
    <div className="flex-1" />
    <Slot className="h-full w-[50px] bg-[#c6c6c6]">
      <svg width="18" height="18" viewBox="0 0 18 18">
        <path d="M1 1h16v16H1zM1 6.300h16M1 11.700h16M6.300 1v16M11.700 1v16" fill="none" stroke="#555" />
      </svg>
    </Slot>
    <Slot className="w-[48px]">
      <svg width="18" height="18" viewBox="0 0 18 18">
        <path d="M2 .500h14v17H2zM5 5h8M5 8h8M5 11h8M5 14h8" fill="none" stroke="#555" />
      </svg>
    </Slot>
    <Slot className="w-[50px]">
      <svg width="18" height="18" viewBox="0 0 18 18">
        <path d="M1 .500h16v17H1zM9 .500v9H1" fill="none" stroke="#555" />
      </svg>
    </Slot>
    <Slot className="ml-[1px] w-[20px]"><Minus size={12} /></Slot>
    <div className="relative ml-[6px] h-px w-[125px] bg-[#444]">
      <div className="absolute left-[60px] top-[-7px] h-[15px] w-[6px] bg-[#555]" />
    </div>
    <Slot className="w-[22px]"><Plus size={12} /></Slot>
    <div className="ml-[10px] w-[41px]">100%</div>
  </div>
);

// ---- taskbar

const EdgeIcon = () => (
  <svg width="30" height="30" viewBox="0 0 32 32">
    <defs>
      <linearGradient id="edge1" x1="0" y1="0" x2="1" y2="1">
        <stop offset="0" stopColor="#35c1f1" />
        <stop offset="1" stopColor="#1061b1" />
      </linearGradient>
    </defs>
    <circle cx="16" cy="16" r="15" fill="url(#edge1)" />
    <path d="M31 17c0 5-5 8-10 6-3-1-5-4-4-7 1 2 3 3 5 3 3 0 6-1 9-2z" fill="#5ad34f" />
    <path d="M18 13c3 0 6 1 7 4-3 2-7 2-10 0 0-2 1-4 3-4z" fill="#2b2320" />
  </svg>
);

const FolderIcon = () => (
  <svg width="29" height="24" viewBox="0 0 32 30" preserveAspectRatio="none">
    <path d="M1 1h13l3 4h14v24H1z" fill="#fcc23f" />
    <path d="M1 8h30v21H1z" fill="#fcd575" />
    <path d="M8 29v-9h16v9h-5v-4h-6v4z" fill="#1f7fc9" />
    <rect x="4" y="1" width="10" height="2" fill="#e69c13" />
  </svg>
);

const StoreIcon = () => (
  <svg width="29" height="29" viewBox="0 0 30 34" preserveAspectRatio="none">
    <path d="M9 7V3h12v4" fill="none" stroke="#1b87d4" strokeWidth="2" />
    <rect x="1" y="7" width="28" height="26" rx="2" fill="#f5f5f5" />
    <rect x="9" y="13" width="5.500" height="5.500" fill="#f25022" />
    <rect x="15.500" y="13" width="5.500" height="5.500" fill="#7fba00" />
    <rect x="9" y="19.500" width="5.500" height="5.500" fill="#00a4ef" />
    <rect x="15.500" y="19.500" width="5.500" height="5.500" fill="#ffb900" />
  </svg>
);

const MailIcon = () => (
  <svg width="29" height="28" viewBox="0 0 32 32" preserveAspectRatio="none">
    <path d="M16 1 31 13v18H1V13z" fill="#1b74c5" />
    <path d="M1 13 16 25 31 13v18H1z" fill="#3db1ec" />
    <path d="M6 12h20l-10 8z" fill="#fff" />
  </svg>
);

const ClapperIcon = () => (
  <svg width="28" height="28" viewBox="0 0 28 34" preserveAspectRatio="none" className="font-['Liberation_Sans',sans-serif]">
    <path d="M1 7 26 1l1 5-25 6z" fill="#333" stroke="#fff" strokeDasharray="3 2" />
    <rect x="2" y="11" width="24" height="22" fill="#f2f2f2" />
    <text x="3" y="28" fontSize="13" fontWeight="700" fill="#3878c8">3</text>
    <text x="11" y="28" fontSize="13" fontWeight="700" fill="#d64a3a">2</text>
    <text x="19" y="28" fontSize="13" fontWeight="700" fill="#3878c8">1</text>
  </svg>
);

const MessengerIcon = () => (
  <svg width="31" height="30" viewBox="0 0 34 34" preserveAspectRatio="none" className="font-['Liberation_Sans',sans-serif]">
    <defs>
      <linearGradient id="msg1" x1="0" y1="1" x2="1" y2="0">
        <stop offset="0" stopColor="#2f7bf5" />
        <stop offset=".55" stopColor="#a358f0" />
        <stop offset="1" stopColor="#fb6f7a" />
      </linearGradient>
    </defs>
    <path d="M15 1C6 1 1 8 1 15c0 5 2 8 5 10v6l5-3c10 2 18-4 18-13C29 7 23 1 15 1z" fill="url(#msg1)" />
    <path d="M6 19l7-9 4 4 5-2-7 8-4-4z" fill="#fff" />
    <circle cx="24" cy="23" r="9.500" fill="#ff0000" />
    <text x="24" y="29" fontSize="16" fill="#fff" textAnchor="middle">2</text>
  </svg>
);

const ExcelIcon = () => (
  <svg width="29" height="28" viewBox="0 0 32 32" preserveAspectRatio="none" className="font-['Liberation_Sans',sans-serif]">
    <rect x="8" y="2" width="22" height="28" rx="1" fill="#21a366" />
    <rect x="19" y="2" width="11" height="14" fill="#33c481" />
    <rect x="8" y="16" width="22" height="14" fill="#107c41" />
    <rect x="1" y="8" width="15" height="15" fill="#185c37" />
    <text x="8.500" y="20" fontSize="12" fontWeight="700" fill="#fff" textAnchor="middle">X</text>
  </svg>
);

const SlothArt = () => (
  <svg width="110" height="50" viewBox="0 5 110 50" className="absolute right-0 top-0">
    <path d="M24 8 50 11 65 15 110 42V55H96L70 30 50 17z" fill="#7a4a2c" />
    <path d="M57 5 72 20" stroke="#7a4a2c" strokeWidth="2" />
    <path d="M23 13 32 10 29 20z" fill="#9bc53d" />
    <path d="M88 27 92 16 101 18 93 28z" fill="#9bc53d" />
    <path d="M44 14 44 7" stroke="#b5a999" strokeWidth="3.500" />
    <path d="M74 32 79 24 76 20" stroke="#968774" strokeWidth="5" fill="none" />
    <path d="M46 38 30 40 22 33" stroke="#b5a999" strokeWidth="5" fill="none" />
    <ellipse cx="60" cy="37" rx="20" ry="13" transform="rotate(15 60 37)" fill="#a99a87" />
    <circle cx="40" cy="25" r="12" fill="#c2b7a8" />
    <ellipse cx="38" cy="25" rx="7" ry="6" fill="#8d8377" />
    <circle cx="35" cy="26" r="2" fill="#222" />
    <circle cx="41" cy="23" r="2" fill="#222" />
  </svg>
);

const Taskbar = () => (
  <div className="flex h-[50px] shrink-0 items-center bg-gradient-to-r from-[#2c2623] via-[#3b2c26] to-[#27211f] text-white font-['Roboto',sans-serif]">
    <Slot className="h-full w-[60px] bg-[#0e0e0e]">
      <svg width="20" height="20" viewBox="0 0 20 20">
        <path d="M0 3l8-1.100V9.500H0zM9 1.700 20 0v9.500H9zM0 10.500h8v7.600L0 17zM9 10.500h11V20L9 18.300z" fill="#fff" />
      </svg>
    </Slot>
    <div className="relative flex h-full w-[360px] items-center border-t border-[#d9d9d9] bg-[#f0f0f0] text-[#333]">
      <svg width="22" height="22" viewBox="0 0 24 24" className="ml-[14px]">
        <circle cx="14" cy="9" r="7.500" fill="none" stroke="#222" strokeWidth="1.300" />
        <path d="M9 15 2 23" stroke="#222" strokeWidth="1.300" />
      </svg>
      <span className="ml-[14px] text-[19px]">Type here to search</span>
      <SlothArt />
    </div>
    <Slot className="h-full w-[62px]">
      <svg width="20" height="19" viewBox="0 0 20 30" preserveAspectRatio="none">
        <path d="M1 1h11M1 29h11M1 9h11v12H1zM16 1v28M19 1v28" fill="none" stroke="#fff" strokeWidth="1.300" />
      </svg>
    </Slot>
    <Slot className="h-full w-[62px]"><EdgeIcon /></Slot>
    <Slot className="relative h-full w-[62px]">
      <FolderIcon />
      <div className="absolute bottom-0 left-[7px] h-[3px] w-[51px] bg-[#76b9ed]" />
    </Slot>
    <Slot className="h-full w-[62px]"><StoreIcon /></Slot>
    <Slot className="h-full w-[62px]"><MailIcon /></Slot>
    <Slot className="h-full w-[62px]"><ClapperIcon /></Slot>
    <Slot className="relative h-full w-[62px]">
      <MessengerIcon />
      <div className="absolute bottom-0 left-[6px] h-[3px] w-[51px] bg-[#76b9ed]" />
    </Slot>
    <Slot className="relative ml-[2px] h-full w-[60px] bg-[#574b46]">
      <ExcelIcon />
      <div className="absolute bottom-0 left-0 h-[3px] w-full bg-[#76b9ed]" />
    </Slot>
    <div className="flex-1" />
    <svg width="32" height="29" viewBox="0 0 34 34" preserveAspectRatio="none" className="font-['Liberation_Sans',sans-serif]">
      <path d="M6 31a6 6 0 0 1-1-12c1-6 9-8 13-3 5-2 11 2 10 8 3 2 2 7-2 7z" fill="#a9cdee" />
      <circle cx="24" cy="9" r="8" fill="#d9381e" />
      <text x="24" y="14" fontSize="13" fill="#fff" textAnchor="middle">1</text>
    </svg>
    <span className="ml-[8px] whitespace-nowrap text-[17px]">22°C</span>
    <span dir="rtl" className="ml-[10px] w-[70px] whitespace-nowrap font-['DejaVu_Sans',sans-serif] text-[17px]">غائم غالبًا</span>
    <Slot className="ml-[24px] w-[26px]"><ChevronUp size={22} strokeWidth={1.200} /></Slot>
    <Slot className="ml-[5px] w-[26px]">
      <svg width="15" height="19" viewBox="0 0 16 26" preserveAspectRatio="none">
        <rect x="1" y="6" width="12" height="13" rx="2" fill="none" stroke="#fff" />
        <path d="M13 10l3-1v7l-3-1M3 3c3-3 6-3 9 0M3 23c3 2 6 2 9 0" fill="none" stroke="#fff" />
      </svg>
    </Slot>
    <Slot className="ml-[6px] w-[24px]">
      <svg width="17" height="16" viewBox="0 0 20 20" preserveAspectRatio="none">
        <path d="M2 19c0-9 7-16 16-16M6 19c0-6 5-12 12-12M10 19c0-4 3-8 8-8" fill="none" stroke="#aaa" />
        <circle cx="15" cy="17" r="2" fill="#fff" />
      </svg>
    </Slot>
    <Slot className="ml-[4px] w-[24px]">
      <svg width="18" height="16" viewBox="0 0 22 22" preserveAspectRatio="none">
        <path d="M1 8h3l5-5v16l-5-5H1zM12 7c2 2 2 6 0 8M15 4c4 4 4 10 0 14" fill="none" stroke="#fff" />
      </svg>
    </Slot>
    <span className="ml-[10px] text-[15px]">ENG</span>
    <div className="ml-[14px] flex w-[72px] flex-col items-center font-['DejaVu_Sans',sans-serif] text-[14px] leading-[22px]">
      <span dir="rtl" className="whitespace-nowrap">ص 07:33</span>
      <span className="whitespace-nowrap">٢٠٢٤/٠٣/٣٠</span>
    </div>
    <Slot className="relative ml-[14px] w-[30px]">
      <svg width="18" height="17" viewBox="0 0 22 24" preserveAspectRatio="none" className="-mt-[8px]">
        <path d="M1 1h20v17H12l-4 5v-5H1z" fill="#fff" />
        <path d="M4 6h14M4 10h14M4 14h9" stroke="#444" />
      </svg>
      <span className="absolute left-[12px] top-[2px] flex h-[21px] w-[20px] items-center justify-center rounded-full border border-[#888] bg-[#2b2320] font-['DejaVu_Sans',sans-serif] text-[13px]">٤</span>
    </Slot>
    <Slot className="ml-[19px] w-[30px]">
      <svg width="25" height="25" viewBox="0 0 28 34" preserveAspectRatio="none" className="font-['Liberation_Sans',sans-serif]">
        <path d="M3 14C3 6 8 2 14 2h3L9 22H5C3 20 3 18 3 14z" fill="#2aa2e0" />
        <path d="M14 2h6c3 0 4 2 4 5v10l-5 5-5-8z" fill="#b14fcf" />
        <path d="M9 22l5-12 5 12z" fill="#7ac34a" />
        <path d="M18 10l6 1v6l-6 5z" fill="#f0568f" />
        <rect x="8" y="22" width="20" height="11" fill="#f4c21b" />
        <text x="18" y="31" fontSize="9" fontWeight="700" fill="#333" textAnchor="middle">PRE</text>
      </svg>
    </Slot>
    <div className="w-[26px]" />
  </div>
);

export default function App() {
  return (
    <div className="relative flex h-[1080px] w-[1920px] flex-col overflow-hidden bg-white">
      <TitleBar />
      <Ribbon />
      <FormulaBar />
      <ColumnHeader />
      <Sheet />
      <SheetTabs />
      <StatusBar />
      <Taskbar />
      {/* site watermark sits over the screenshot */}
      <div className="pointer-events-none absolute left-[845px] top-[940px] flex w-[232px] flex-col items-center text-[#b0b0b0]/50">
        <span dir="rtl" className="font-['DejaVu_Sans',sans-serif] text-[64px] font-bold leading-[80px]">مستقل</span>
        <span className="font-['Liberation_Sans',sans-serif] text-[38px] font-bold leading-[42px]">mostaql.com</span>
      </div>
    </div>
  );
}
